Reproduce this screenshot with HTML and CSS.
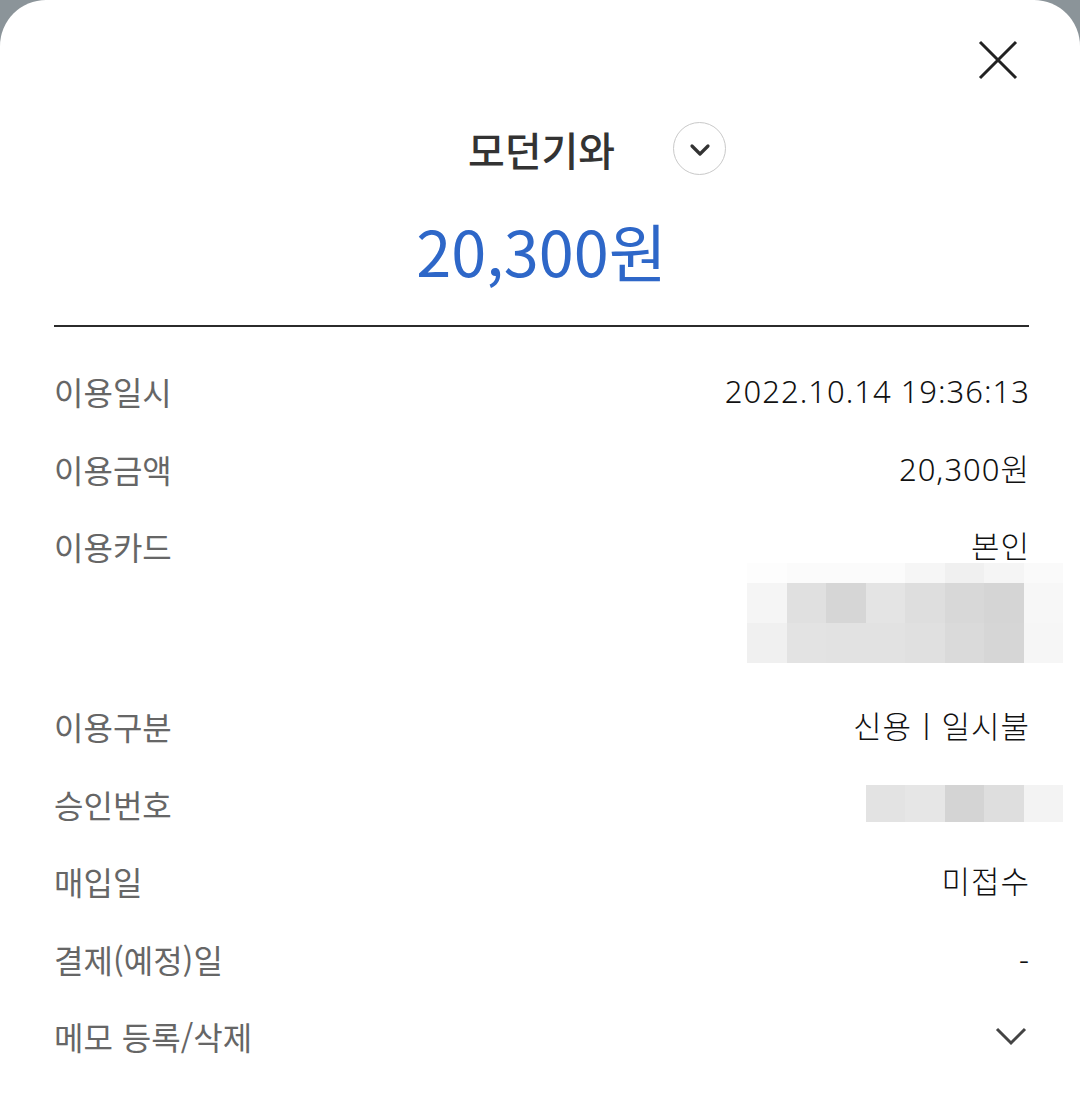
FILE: index.html
```html
<!DOCTYPE html>
<html lang="ko">
<head>
  <meta charset="UTF-8" />
  <meta name="viewport" content="width=device-width, initial-scale=1.0"/>
  <title>이용내역 상세</title>
  <link rel="stylesheet" href="styles.css">
</head>
<body>
  <div class="sheet">
    <div class="close-bar">
      <button class="close-btn" aria-label="닫기">
        <svg width="40" height="40" viewBox="0 0 40 40">
          <path d="M2 2 L38 38 M38 2 L2 38" stroke="#222" stroke-width="3" fill="none"/>
        </svg>
      </button>
    </div>

    <div class="title-row">
      <span></span>
      <h2 class="merchant">모던기와</h2>
      <button class="toggle-btn" aria-label="펼치기">
        <svg width="22" height="14" viewBox="0 0 22 14">
          <path d="M3 3 L11 11 L19 3" stroke="#333" stroke-width="3.2" fill="none" stroke-linecap="round" stroke-linejoin="round"/>
        </svg>
      </button>
    </div>

    <div class="amount">20,300원</div>

    <div class="detail-list">
      <div class="row">
        <span class="label">이용일시</span>
        <span class="value">2022.10.14 19:36:13</span>
      </div>
      <div class="row">
        <span class="label">이용금액</span>
        <span class="value">20,300원</span>
      </div>
      <div class="row row-card">
        <span class="label">이용카드</span>
        <div class="card-value">
          <span class="value">본인</span>
          <!-- masked card info -->
          <div class="mask mask-card">
            <i style="background:#fdfdfd"></i><i style="background:#fbfbfb"></i><i style="background:#fbfbfb"></i><i style="background:#fbfbfb"></i><i style="background:#f6f6f6"></i><i style="background:#f0f0f0"></i><i style="background:#f5f5f5"></i><i style="background:#fafafa"></i>
            <i style="background:#f5f5f5"></i><i style="background:#e0e0e0"></i><i style="background:#d6d6d6"></i><i style="background:#e4e4e4"></i><i style="background:#dedede"></i><i style="background:#d8d8d8"></i><i style="background:#d5d5d5"></i><i style="background:#f7f7f7"></i>
            <i style="background:#f0f0f0"></i><i style="background:#e3e3e3"></i><i style="background:#e2e2e2"></i><i style="background:#e2e2e2"></i><i style="background:#e0e0e0"></i><i style="background:#dadada"></i><i style="background:#d6d6d6"></i><i style="background:#f6f6f6"></i>
          </div>
        </div>
      </div>
      <div class="row">
        <span class="label">이용구분</span>
        <span class="value">신용ㅣ일시불</span>
      </div>
      <div class="row">
        <span class="label">승인번호</span>
        <div class="mask mask-approval">
          <i style="background:#e3e3e3"></i><i style="background:#e6e6e6"></i><i style="background:#d4d4d4"></i><i style="background:#dedede"></i><i style="background:#f3f3f3"></i>
        </div>
      </div>
      <div class="row">
        <span class="label">매입일</span>
        <span class="value">미접수</span>
      </div>
      <div class="row">
        <span class="label">결제(예정)일</span>
        <span class="value">-</span>
      </div>
      <div class="row">
        <span class="label">메모 등록/삭제</span>
        <svg class="memo-chevron" width="34" height="20" viewBox="0 0 34 20">
          <path d="M3 3 L17 17 L31 3" stroke="#444" stroke-width="3" fill="none"/>
        </svg>
      </div>
    </div>
  </div>
</body>
</html>
```

FILE: styles.css
```css
:root {
  --blue: #2e67c8;
  --label: #666666;
  --text: #111111;
  --dim-bg: #8b9499;
}
* {
  box-sizing: border-box;
}
body {
  margin: 0;
  background: var(--dim-bg);
  font-family: "Noto Sans CJK KR", "Noto Sans", sans-serif;
}
button {
  background: none;
  border: none;
  padding: 0;
  cursor: pointer;
}
.sheet {
  background: #ffffff;
  border-radius: 46px 46px 0 0;
  min-height: 1097px;
  padding: 40px 51px 0 54px;
}
.close-bar {
  display: flex;
  justify-content: flex-end;
  height: 40px;
  margin-right: 11px;
}
.close-btn {
  width: 40px;
  height: 40px;
  display: flex;
}
.title-row {
  display: grid;
  grid-template-columns: 1fr auto 1fr;
  align-items: center;
  margin-top: 42px;
  height: 52px;
}
.merchant {
  margin: 0;
  font-size: 40px;
  font-weight: 500;
  color: #333;
  line-height: 52px;
}
.toggle-btn {
  justify-self: start;
  margin-left: 58px;
  width: 53px;
  height: 53px;
  border: 1.5px solid #c9c9c9;
  border-radius: 50%;
  display: flex;
  align-items: center;
  justify-content: center;
  padding-top: 3px;
}
.amount {
  text-align: center;
  color: var(--blue);
  font-size: 63px;
  font-weight: 400;
  line-height: 80px;
  margin-top: 36px;
  padding-bottom: 35px;
  border-bottom: 2px solid #2b2b2b;
}
.detail-list {
  padding-top: 25px;
}
.row {
  display: flex;
  justify-content: space-between;
  align-items: center;
  padding: 19px 0 18.5px;
  line-height: 40px;
  font-size: 32px;
}
.label {
  color: var(--label);
  font-weight: 400;
}
.value {
  color: var(--text);
  font-family: "Noto Sans", "Noto Sans CJK KR", sans-serif;
  font-size: 31px;
  font-weight: 300;
  letter-spacing: 1px;
  margin-right: -1px;
}
.row-card {
  align-items: flex-start;
  padding-bottom: 24px;
}
.card-value {
  display: flex;
  flex-direction: column;
  align-items: flex-end;
}
.mask {
  display: grid;
  margin-right: -34px;
}
.mask i {
  display: block;
}
.mask-card {
  margin-top: -3px;
  grid-template-columns: repeat(8, 39.5px);
  grid-template-rows: 20px 40px 40px;
}
.mask-approval {
  grid-template-columns: repeat(5, 39.5px);
  grid-template-rows: 37px;
}
.memo-chevron {
  display: block;
  margin-right: 1px;
}
```
